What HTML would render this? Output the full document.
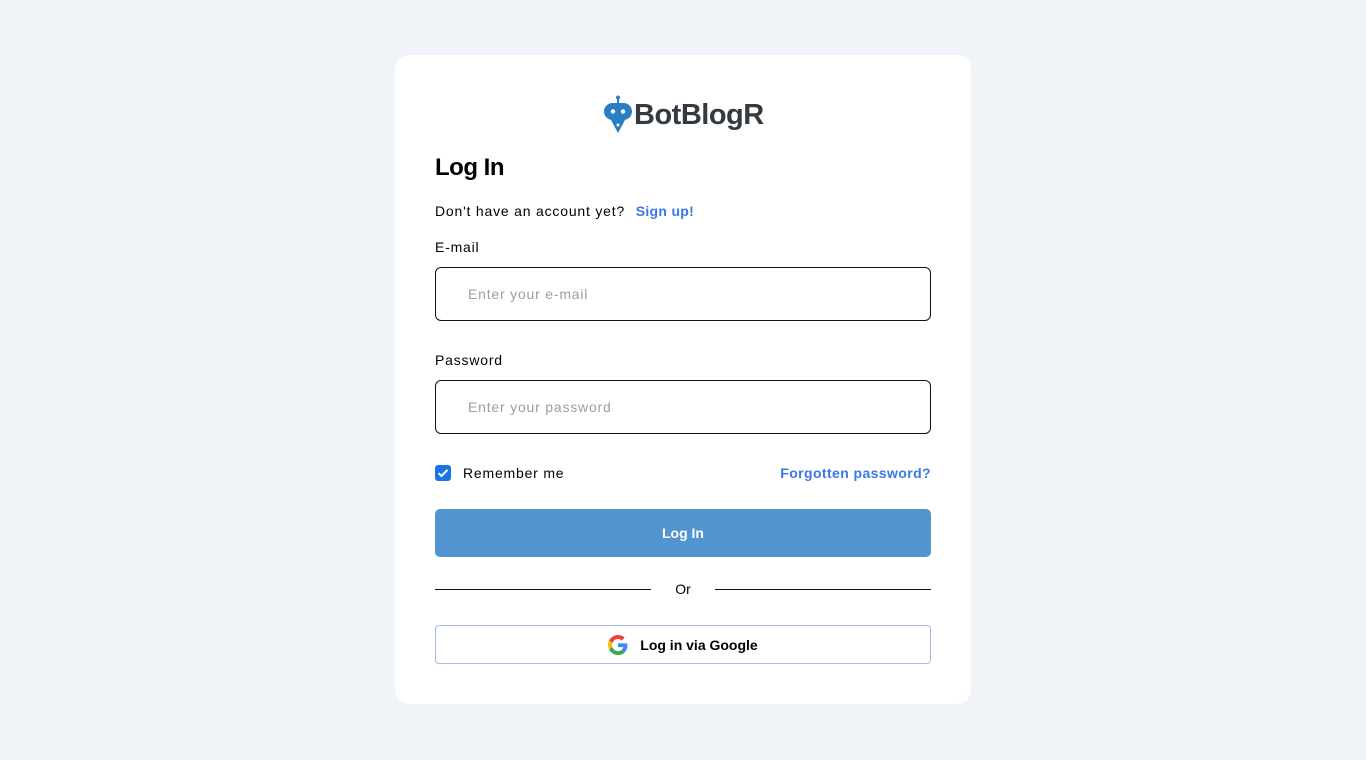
<!DOCTYPE html>
<html><head><style>
*{box-sizing:border-box;margin:0;padding:0}
body{width:1366px;height:760px;background:#f0f3f8;font-family:"Liberation Sans",sans-serif;position:relative;overflow:hidden;color:#000}
.card{position:absolute;left:395px;top:55px;width:576px;height:649px;background:#fff;border-radius:14px}
.abs{position:absolute}
.ls{letter-spacing:0.8px}
.inp{position:absolute;left:40px;width:496px;height:54px;border:1px solid #111;border-radius:6px;font-size:14px;color:#9a9ea6;padding:18px 0 0 32px;letter-spacing:0.8px}
</style></head><body>
<div class="card">
 <div class="abs" style="left:208px;top:40px;height:40px;display:flex;align-items:center">
  <svg width="30" height="40" viewBox="0 0 30 40">
   <line x1="15" y1="2" x2="15" y2="8" stroke="#2a7fc4" stroke-width="2"/>
   <circle cx="15" cy="2.5" r="2" fill="#2a7fc4"/>
   <rect x="1" y="8" width="28" height="17" rx="8.5" fill="#2a7fc4"/>
   <circle cx="10" cy="16.5" r="2.2" fill="#fff"/><circle cx="20" cy="16.5" r="2.2" fill="#fff"/>
   <path d="M8 25 L22 25 L15 38 Z" fill="#2a7fc4"/>
   <circle cx="15" cy="30" r="1.5" fill="#fff"/>
  </svg>
  <span style="font-size:29px;font-weight:bold;color:#333a40;margin-left:1px;letter-spacing:-0.5px">BotBlogR</span>
 </div>
 <div class="abs" style="left:40px;top:99px;font-size:24px;font-weight:bold;letter-spacing:-0.5px">Log In</div>
 <div class="abs ls" style="left:40px;top:148px;font-size:14px">Don't have an account yet? <span style="color:#3b78e7;font-weight:bold;margin-left:6px;letter-spacing:0.3px">Sign up!</span></div>
 <div class="abs ls" style="left:40px;top:184px;font-size:14px">E-mail</div>
 <div class="inp" style="top:212px">Enter your e-mail</div>
 <div class="abs ls" style="left:40px;top:297px;font-size:14px">Password</div>
 <div class="inp" style="top:325px">Enter your password</div>
 <div class="abs" style="left:40px;top:410px;width:16px;height:16px;background:#1a73e8;border-radius:3px">
  <svg width="16" height="16" viewBox="0 0 16 16"><path d="M3.5 8.2 L6.5 11 L12.5 4.8" stroke="#fff" stroke-width="2" fill="none"/></svg>
 </div>
 <div class="abs ls" style="left:68px;top:410px;font-size:14px">Remember me</div>
 <div class="abs" style="right:40px;top:410px;font-size:14px;color:#3b78e7;font-weight:bold;letter-spacing:0.4px">Forgotten password?</div>
 <div class="abs" style="left:40px;top:454px;width:496px;height:48px;background:#5194d0;border-radius:5px;color:#fff;font-size:14px;font-weight:bold;text-align:center;line-height:48px">Log In</div>
 <div class="abs" style="left:40px;top:534px;width:216px;height:1px;background:#111"></div>
 <div class="abs" style="left:320px;top:534px;width:216px;height:1px;background:#111"></div>
 <div class="abs" style="left:256px;top:526px;width:64px;text-align:center;font-size:14px">Or</div>
 <div class="abs" style="left:40px;top:570px;width:496px;height:39px;border:1px solid #a9b8ee;border-radius:4px;display:flex;align-items:center;justify-content:center;font-size:14px;font-weight:bold">
  <svg width="20" height="20" viewBox="0 0 48 48" style="margin-right:12px">
   <path fill="#EA4335" d="M24 9.5c3.5 0 6.6 1.2 9.1 3.6l6.8-6.8C35.8 2.4 30.3 0 24 0 14.6 0 6.6 5.4 2.7 13.3l7.9 6.1C12.5 13.7 17.8 9.5 24 9.5z"/>
   <path fill="#4285F4" d="M46.5 24.5c0-1.6-.1-3.1-.4-4.5H24v9h12.7c-.6 2.9-2.2 5.4-4.7 7.1l7.6 5.900c4.4-4.1 6.9-10.1 6.9-17.5z"/>
   <path fill="#FBBC05" d="M10.5 28.6c-.5-1.4-.8-3-.8-4.6s.3-3.2.8-4.6l-7.9-6.1C1 16.6 0 20.2 0 24s1 7.4 2.7 10.7l7.8-6.1z"/>
   <path fill="#34A853" d="M24 48c6.5 0 11.9-2.1 15.9-5.8l-7.6-5.9c-2.1 1.4-4.9 2.300-8.3 2.3-6.2 0-11.5-4.2-13.4-9.9l-7.9 6.1C6.6 42.6 14.6 48 24 48z"/>
  </svg>Log in via Google
 </div>
</div>
</body></html>
